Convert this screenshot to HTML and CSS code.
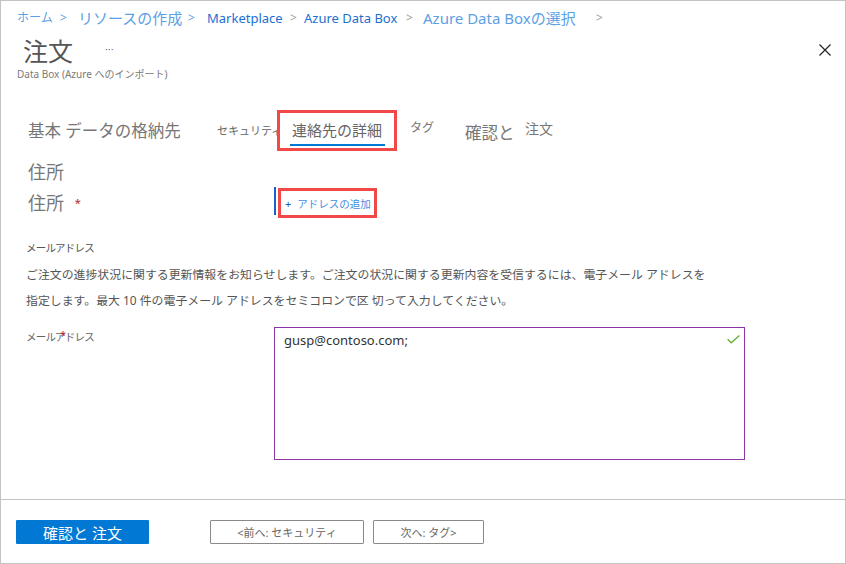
FILE: index.html
```html
<!DOCTYPE html>
<html lang="ja">
<head>
<meta charset="utf-8">
<title>注文</title>
<link rel="stylesheet" href="styles.css">
</head>
<body>
<div class="frame">
  <nav class="crumbs">
    <span class="crumb c-home">ホーム</span>
    <span class="sep sep-light s1">&gt;</span>
    <span class="crumb c-res">リソースの作成</span>
    <span class="sep sep-light s2">&gt;</span>
    <span class="crumb c-mkt">Marketplace</span>
    <span class="sep s3">&gt;</span>
    <span class="crumb c-adb">Azure Data Box</span>
    <span class="sep s4">&gt;</span>
    <span class="crumb c-sel">Azure Data Boxの選択</span>
    <span class="sep s5">&gt;</span>
  </nav>

  <header class="head">
    <div class="head-left">
      <div class="title-row">
        <h1 class="title">注文</h1>
        <span class="more">···</span>
      </div>
      <div class="subtitle">Data Box (Azure へのインポート)</div>
    </div>
    <svg class="close" width="12" height="12" viewBox="0 0 12 12">
      <path d="M0.5 0.5 L11.5 11.5 M11.5 0.5 L0.5 11.5" stroke="#222" stroke-width="1.2" fill="none"/>
    </svg>
  </header>

  <div class="tabs">
    <span class="tab tab-basic">基本 データの格納先</span>
    <span class="tab tab-sec">セキュリティ</span>
    <span class="tab tab-active"><span class="tab-active-label">連絡先の詳細</span></span>
    <span class="tab tab-tag">タグ</span>
    <span class="tab tab-review">確認と</span>
    <span class="tab tab-order">注文</span>
  </div>

  <div class="section-title">住所</div>
  <div class="addr-row">
    <div class="addr-label">住所 <span class="star">*</span></div>
    <div class="addr-bar"></div>
    <div class="add-link"><span class="plus">+</span>アドレスの追加</div>
  </div>

  <div class="email-heading">メールアドレス</div>
  <p class="desc">ご注文の進捗状況に関する更新情報をお知らせします。ご注文の状況に関する更新内容を受信するには、電子メール アドレスを<br>指定します。最大 10 件の電子メール アドレスをセミコロンで区 切って入力してください。</p>

  <div class="email-row">
    <div class="email-label">メールアドレス<span class="req">*</span></div>
    <div class="email-box">gusp@contoso.com;
      <svg class="check" width="13" height="9" viewBox="0 0 13 9">
        <path d="M0.6 4.2 L4.2 7.8 L12.4 0.6" stroke="#62b131" stroke-width="1.3" fill="none"/>
      </svg>
    </div>
  </div>

  <div class="spacer"></div>

  <footer class="footer">
    <button class="btn btn-primary">確認と 注文</button>
    <button class="btn btn-prev">&lt;前へ: セキュリティ</button>
    <button class="btn btn-next">次へ: タグ&gt;</button>
  </footer>
</div>
</body>
</html>
```

FILE: styles.css
```css
html, body {
  margin: 0;
  padding: 0;
  background: #ffffff;
}
body {
  font-family: "Noto Sans", "Noto Sans CJK JP", sans-serif;
  color: #555;
}
.frame {
  width: 846px;
  height: 564px;
  box-sizing: border-box;
  border: 1px solid #c3c3c3;
  display: flex;
  flex-direction: column;
  overflow: hidden;
}

/* breadcrumb */
.crumbs {
  display: flex;
  align-items: center;
  height: 22px;
  margin-top: 6px;
  padding-left: 16px;
  white-space: nowrap;
}
.crumb, .sep {
  flex: none;
  line-height: 22px;
}
.c-home { width: 43px; font-size: 12px; color: #5d9fe4; }
.s1 { width: 18px; }
.c-res { width: 110px; font-size: 15px; color: #5d9fe4; }
.s2 { width: 19px; }
.c-mkt { width: 83px; font-size: 13px; color: #1c6fd1; }
.s3 { width: 14px; }
.c-adb { width: 102px; font-size: 13px; color: #1c6fd1; }
.s4 { width: 17px; }
.c-sel { width: 173px; font-size: 15px; color: #5d9fe4; }
.sep { font-size: 12px; color: #a0a0a0; }
.sep-light { color: #5d9fe4; }

/* header */
.head {
  display: flex;
  justify-content: space-between;
  align-items: flex-start;
  margin-top: 8px;
}
.title-row {
  display: flex;
  align-items: center;
  height: 28px;
  padding-left: 22px;
}
.title {
  margin: 0;
  width: 82px;
  font-size: 25px;
  line-height: 28px;
  font-weight: normal;
  color: #555;
}
.more {
  font-family: "DejaVu Sans", sans-serif;
  font-size: 9px;
  line-height: 12px;
  color: #444;
  letter-spacing: 0;
  margin-top: -2px;
}
.subtitle {
  margin-top: 2px;
  padding-left: 16px;
  font-size: 10px;
  line-height: 14px;
  color: #7a7a7a;
}
.close {
  margin: 7px 14px 0 0;
  flex: none;
}

/* tabs */
.tabs {
  display: flex;
  align-items: center;
  height: 41px;
  margin-top: 29px;
  padding-left: 27px;
  white-space: nowrap;
}
.tab { flex: none; color: #777; }
.tab-basic { width: 189px; font-size: 16.5px; line-height: 22px; }
.tab-sec { width: 60px; font-size: 11px; color: #666; margin-bottom: 2px; }
.tab-active {
  width: 120px;
  height: 41px;
  box-sizing: border-box;
  border: 3px solid #f24848;
  padding: 7px 0 0 10px;
}
.tab-active-label {
  display: block;
  width: 95px;
  box-sizing: border-box;
  padding: 0 0 4px 2px;
  font-size: 15px;
  line-height: 20px;
  color: #666;
  border-bottom: 2px solid #0078d4;
}
.tab-tag { width: 55px; margin-left: 13px; font-size: 12px; margin-bottom: 8px; }
.tab-review { width: 60px; font-size: 16.5px; margin-top: 3px; }
.tab-order { font-size: 14px; margin-bottom: 6px; }

/* address */
.section-title {
  margin-top: 9px;
  padding-left: 27px;
  font-size: 18px;
  line-height: 24px;
  color: #777;
}
.addr-row {
  display: flex;
  align-items: center;
  height: 31px;
  margin-top: 3px;
  padding-left: 27px;
}
.addr-label {
  width: 246px;
  flex: none;
  font-size: 18px;
  line-height: 24px;
  color: #777;
}
.star {
  color: #b4262c;
  font-size: 11px;
  vertical-align: top;
  margin-left: 6px;
}
.addr-bar {
  align-self: flex-start;
  width: 2px;
  height: 28px;
  background: #1a5fd1;
}
.add-link {
  align-self: flex-end;
  margin-left: 2px;
  width: 99px;
  height: 30px;
  box-sizing: border-box;
  border: 3px solid #f24848;
  display: flex;
  align-items: center;
  padding-left: 4px;
  font-size: 10.5px;
  color: #3f8fe0;
  white-space: nowrap;
}
.plus {
  color: #1d5fc0;
  font-size: 11px;
  margin-right: 6px;
}

/* email */
.email-heading {
  margin-top: 22px;
  padding-left: 25px;
  font-size: 10.5px;
  line-height: 16px;
  letter-spacing: -0.8px;
  color: #555;
}
.desc {
  margin: 5px 0 0;
  padding-left: 25px;
  font-size: 11.9px;
  line-height: 26px;
  color: #555;
  white-space: nowrap;
}
.email-row {
  display: flex;
  margin-top: 14px;
  padding-left: 25px;
}
.email-label {
  position: relative;
  width: 248px;
  flex: none;
  font-size: 10.5px;
  line-height: 20px;
  letter-spacing: -0.8px;
  color: #666;
}
.req {
  position: absolute;
  left: 34px;
  top: -2px;
  color: #b4262c;
  font-size: 11px;
}
.email-box {
  position: relative;
  width: 471px;
  height: 133px;
  box-sizing: border-box;
  border: 1px solid #8a34a6;
  padding: 4px 9px;
  font-size: 13px;
  line-height: 16px;
  color: #333;
}
.check {
  position: absolute;
  right: 4px;
  top: 7px;
}

.spacer { flex: 1; }

/* footer */
.footer {
  display: flex;
  align-items: flex-start;
  height: 64px;
  box-sizing: border-box;
  border-top: 1px solid #c3c3c3;
  padding: 20px 0 0 15px;
}
.btn {
  font-family: "Noto Sans", "Noto Sans CJK JP", sans-serif;
  height: 24px;
  box-sizing: border-box;
  display: flex;
  align-items: center;
  justify-content: center;
  padding: 0;
  margin: 0;
  white-space: nowrap;
  cursor: pointer;
}
.btn-primary {
  width: 133px;
  border: none;
  border-radius: 1px;
  background: #0078d4;
  color: #fff;
  font-size: 15px;
}
.btn-prev, .btn-next {
  background: #fff;
  border: 1px solid #8a8a8a;
  border-radius: 1px;
  color: #666;
  font-size: 11px;
}
.btn-prev { width: 154px; margin-left: 61px; }
.btn-next { width: 111px; margin-left: 9px; }
```
